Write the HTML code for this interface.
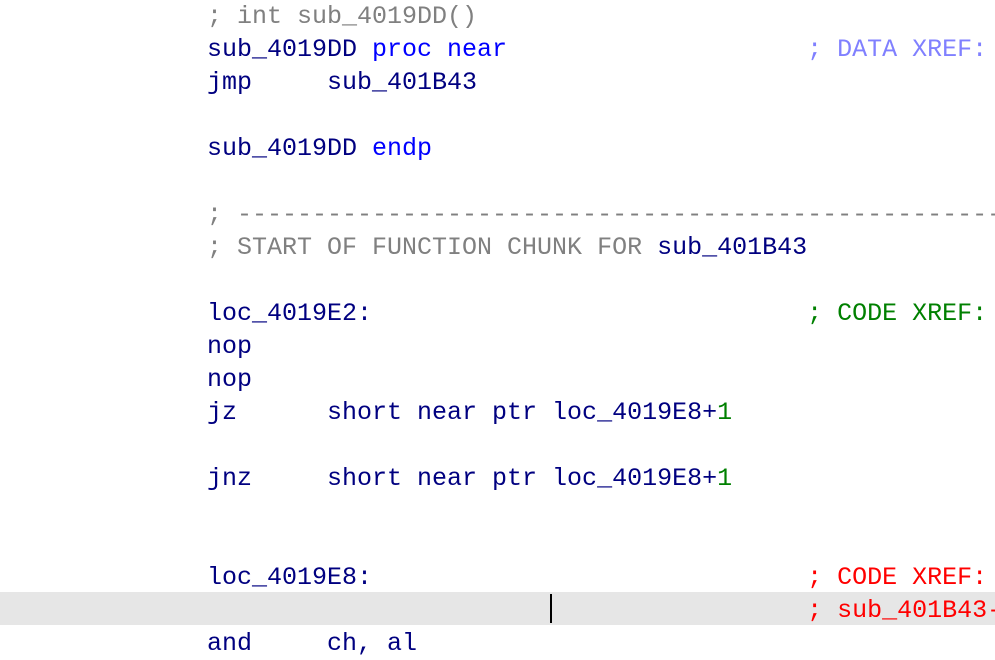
<!DOCTYPE html>
<html><head><meta charset="utf-8"><style>
html,body{margin:0;padding:0;width:995px;height:655px;overflow:hidden;background:#fff}
.l{position:absolute;left:207px;height:33px;line-height:33px;font-family:"Liberation Mono",monospace;font-size:25px;white-space:pre;color:#000080}
.g{color:#808080}.b{color:#0000ff}.p{color:#8080ff}.gr{color:#008000}.r{color:#ff0000}
.hl{position:absolute;left:0;top:592px;width:995px;height:33px;background:#e6e6e6}
.cur{position:absolute;left:550px;top:594px;width:2px;height:29px;background:#000}
</style></head><body>
<div class="hl"></div><div class="cur"></div>
<div class="l g" style="top:0px">; int sub_4019DD()</div>
<div class="l" style="top:33px">sub_4019DD <span class="b">proc near</span>                    <span class="p">; DATA XREF:</span></div>
<div class="l" style="top:66px">jmp     sub_401B43</div>
<div class="l" style="top:132px">sub_4019DD <span class="b">endp</span></div>
<div class="l g" style="top:198px">; ----------------------------------------------------</div>
<div class="l g" style="top:231px">; START OF FUNCTION CHUNK FOR <span style="color:#000080">sub_401B43</span></div>
<div class="l" style="top:297px">loc_4019E2:                             <span class="gr">; CODE XREF:</span></div>
<div class="l" style="top:330px">nop</div>
<div class="l" style="top:363px">nop</div>
<div class="l" style="top:396px">jz      short near ptr loc_4019E8+<span class="gr">1</span></div>
<div class="l" style="top:462px">jnz     short near ptr loc_4019E8+<span class="gr">1</span></div>
<div class="l" style="top:561px">loc_4019E8:                             <span class="r">; CODE XREF:</span></div>
<div class="l" style="top:594px">                                        <span class="r">; sub_401B43-</span></div>
<div class="l" style="top:627px">and     ch, al</div>
</body></html>
